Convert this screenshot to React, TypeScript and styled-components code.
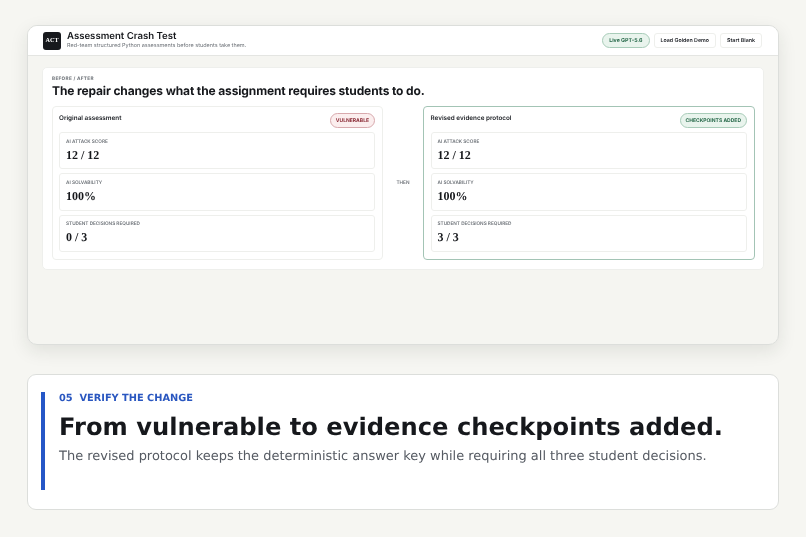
import React from 'react'
import styled, { createGlobalStyle } from 'styled-components'

const Global = createGlobalStyle`
  html, body {
    margin: 0;
    background: #f6f6f2;
  }
  * { box-sizing: border-box; }
  body { text-rendering: geometricPrecision; }
`

const Page = styled.div`
  padding: 25px 27px 27px;
  width: 806px;
  height: 537px;
  overflow: hidden;
  font-family: Inter, sans-serif;
  color: #16181c;
  will-change: transform;
`

const Window = styled.div`
  height: 320px;
  background: #f5f5f1;
  border: 1px solid #dcdedb;
  border-radius: 10px;
  box-shadow: 0 6px 18px rgba(30, 35, 30, 0.1);
  overflow: hidden;
  filter: blur(0.3px);
`

const Header = styled.header`
  height: 30px;
  padding: 0 16px 0 15px;
  display: flex;
  align-items: center;
  justify-content: space-between;
  background: #fff;
  border-bottom: 1px solid #e4e5e2;
`

const Brand = styled.div`
  display: flex;
  align-items: center;
  gap: 6px;
`

const Logo = styled.div`
  width: 18px;
  height: 18px;
  border-radius: 3px;
  background: #17191d;
  color: #fff;
  font: 700 6.2px 'Liberation Serif', serif;
  display: flex;
  align-items: center;
  justify-content: center;
`

const AppTitle = styled.div`
  font-size: 9.6px;
  font-weight: 600;
  line-height: 12px;
`

const AppSub = styled.div`
  font-size: 5.47px;
  line-height: 7px;
  color: #6d7278;
`

const Actions = styled.div`
  display: flex;
  align-items: center;
  gap: 4px;
`

const LivePill = styled.div`
  height: 15px;
  padding: 0 6px;
  border-radius: 8px;
  border: 1px solid #a8ccb9;
  background: #e9f4ed;
  color: #27694a;
  font-size: 5.3px;
  font-weight: 700;
  display: flex;
  align-items: center;
`

const Button = styled.div`
  height: 15px;
  padding: 0 6px;
  border-radius: 3px;
  border: 1px solid #eeefec;
  background: #fff;
  color: #22252a;
  font-size: 5.3px;
  font-weight: 600;
  display: flex;
  align-items: center;
`

const Body = styled.div`
  padding: 11px 14px;
`

const Panel = styled.section`
  height: 203px;
  padding: 8px 9px 9px;
  background: #fff;
  border: 1px solid #eeefec;
  border-radius: 5px;
`

const Eyebrow = styled.div`
  font-size: 4.7px;
  line-height: 6px;
  font-weight: 700;
  letter-spacing: 0.3px;
  color: #6d7278;
`

const PanelTitle = styled.h2`
  margin: 1px 0 7px;
  font-size: 12px;
  line-height: 16px;
  font-weight: 700;
  letter-spacing: -0.13px;
  color: #16181c;
`

const Compare = styled.div`
  display: grid;
  grid-template-columns: 331px 40px 332px;
`

const Column = styled.div<{ $revised?: boolean }>`
  height: 154px;
  padding: 6px 7px 6px ${(p) => (p.$revised ? '6.5px' : '6px')};
  border-radius: 4px;
  border: 1px solid ${(p) => (p.$revised ? '#a3c4b5' : '#eeefec')};
`

const ColumnHead = styled.div`
  height: 19px;
  display: flex;
  justify-content: space-between;
  align-items: flex-start;
`

const ColumnTitle = styled.div`
  font-size: 6.35px;
  line-height: 10px;
  font-weight: 600;
  color: #22252a;
`

const Badge = styled.div<{ $tone: 'bad' | 'good' }>`
  height: 15px;
  padding: 0 5px;
  border-radius: 8px;
  font-size: 5px;
  font-weight: 700;
  display: flex;
  align-items: center;
  border: 1px solid ${(p) => (p.$tone === 'bad' ? '#d8a9ad' : '#a8ccb9')};
  background: ${(p) => (p.$tone === 'bad' ? '#fbeeee' : '#e9f4ed')};
  color: ${(p) => (p.$tone === 'bad' ? '#8a2a35' : '#27694a')};
`

const Metrics = styled.div`
  display: grid;
  gap: 4.2px;
`

const Metric = styled.div`
  height: 37.2px;
  padding: 5.5px 6px;
  background: #fff;
  border: 1px solid #eeefec;
  border-radius: 3px;
`

const MetricLabel = styled.div`
  font-size: 4.7px;
  line-height: 6px;
  font-weight: 600;
  color: #6d7278;
`

const MetricValue = styled.div`
  margin-top: 3px;
  font-family: 'Liberation Serif', serif;
  font-size: 12px;
  line-height: 14px;
  font-weight: 700;
  color: #16181c;
`

const Then = styled.div`
  padding-top: 74px;
  text-align: center;
  font-size: 4.7px;
  line-height: 6px;
  font-weight: 600;
  color: #6d7278;
`

const Step = styled.section`
  margin-top: 29px;
  height: 136px;
  padding: 17px 13px;
  background: #fff;
  border: 1px solid #dcdedb;
  border-radius: 9px;
  filter: blur(0.2px);
`

const StepInner = styled.div`
  height: 98px;
  padding: 1px 0 0 14px;
  border-left: 4px solid #2557c7;
  font-family: 'DejaVu Sans', sans-serif;
`

const StepKicker = styled.div`
  font-size: 9.8px;
  line-height: 12px;
  font-weight: 700;
  color: #2a57c0;
`

const StepTitle = styled.h1`
  margin: 7px 0 0;
  font-size: 24.2px;
  line-height: 30px;
  font-weight: 700;
  color: #16181c;
`

const StepText = styled.p`
  margin: 6px 0 0;
  font-size: 12.98px;
  line-height: 18px;
  color: #555a62;
`

const metrics = {
  before: [
    { label: 'AI ATTACK SCORE', value: '12 / 12' },
    { label: 'AI SOLVABILITY', value: '100%' },
    { label: 'STUDENT DECISIONS REQUIRED', value: '0 / 3' },
  ],
  after: [
    { label: 'AI ATTACK SCORE', value: '12 / 12' },
    { label: 'AI SOLVABILITY', value: '100%' },
    { label: 'STUDENT DECISIONS REQUIRED', value: '3 / 3' },
  ],
}

const MetricList = ({ items }: { items: { label: string; value: string }[] }) => (
  <Metrics>
    {items.map((m) => (
      <Metric key={m.label}>
        <MetricLabel>{m.label}</MetricLabel>
        <MetricValue>{m.value}</MetricValue>
      </Metric>
    ))}
  </Metrics>
)

export default function App() {
  return (
    <Page>
      <Global />
      <Window>
        <Header>
          <Brand>
            <Logo>ACT</Logo>
            <div>
              <AppTitle>Assessment Crash Test</AppTitle>
              <AppSub>Red-team structured Python assessments before students take them.</AppSub>
            </div>
          </Brand>
          <Actions>
            <LivePill>Live GPT-5.6</LivePill>
            <Button>Load Golden Demo</Button>
            <Button>Start Blank</Button>
          </Actions>
        </Header>
        <Body>
          <Panel>
            <Eyebrow>BEFORE / AFTER</Eyebrow>
            <PanelTitle>The repair changes what the assignment requires students to do.</PanelTitle>
            <Compare>
              <Column>
                <ColumnHead>
                  <ColumnTitle>Original assessment</ColumnTitle>
                  <Badge $tone="bad">VULNERABLE</Badge>
                </ColumnHead>
                <MetricList items={metrics.before} />
              </Column>
              <Then>THEN</Then>
              <Column $revised>
                <ColumnHead>
                  <ColumnTitle>Revised evidence protocol</ColumnTitle>
                  <Badge $tone="good">CHECKPOINTS ADDED</Badge>
                </ColumnHead>
                <MetricList items={metrics.after} />
              </Column>
            </Compare>
          </Panel>
        </Body>
      </Window>

      <Step>
        <StepInner>
          <StepKicker>05&nbsp; VERIFY THE CHANGE</StepKicker>
          <StepTitle>From vulnerable to evidence checkpoints added.</StepTitle>
          <StepText>The revised protocol keeps the deterministic answer key while requiring all three student decisions.</StepText>
        </StepInner>
      </Step>
    </Page>
  )
}
